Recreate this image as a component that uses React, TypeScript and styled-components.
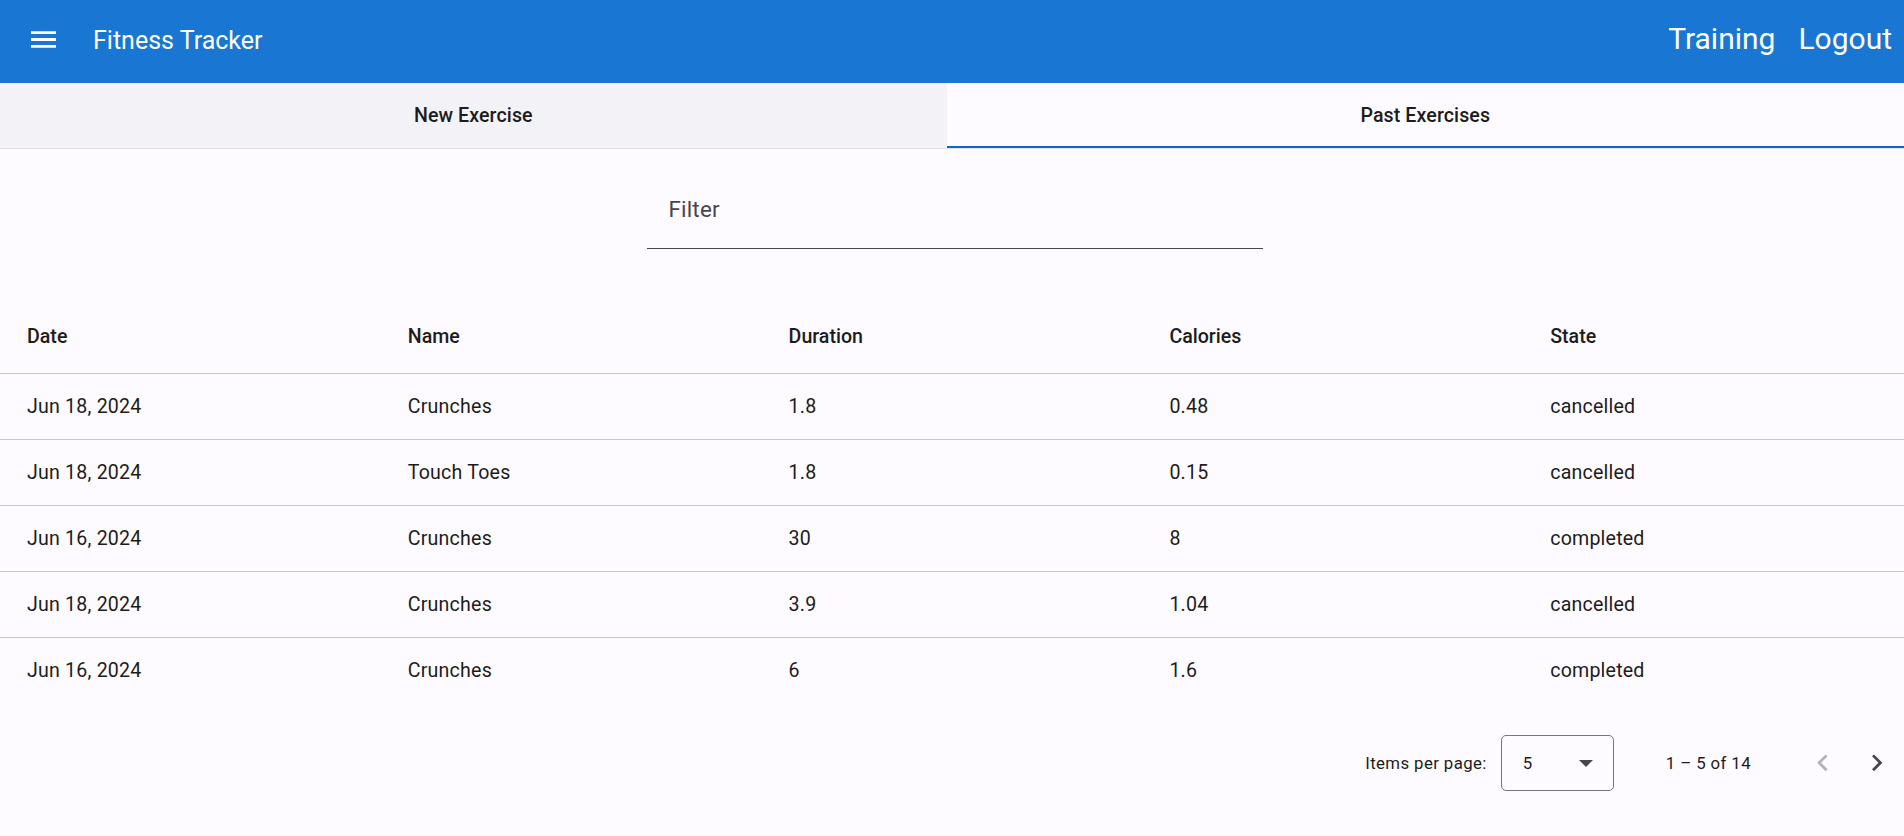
import React from "react";
import styled, { createGlobalStyle } from "styled-components";

const GlobalStyle = createGlobalStyle`
  html, body {
    margin: 0;
    padding: 0;
    background: #fdfbff;
    font-family: Roboto, "Liberation Sans", Arial, sans-serif;
    color: #1d1b20;
  }
  * { box-sizing: border-box; }
`;

const Toolbar = styled.header`
  height: 83px;
  background: #1976d2;
  color: #ffffff;
  display: flex;
  align-items: center;
  padding: 0 12px 0 31px;
`;

const MenuButton = styled.button`
  background: none;
  border: none;
  padding: 0;
  margin: 0 37px 5px 0;
  display: flex;
  align-items: center;
  color: #ffffff;
  cursor: pointer;
`;

const Title = styled.span`
  font-size: 25px;
  font-weight: 400;
  line-height: 1;
  padding-bottom: 3px;
`;

const Spacer = styled.div`
  flex: 1;
`;

const NavList = styled.nav`
  display: flex;
  align-items: center;
  gap: 23px;
`;

const NavLink = styled.a`
  font-size: 30px;
  color: #ffffff;
  text-decoration: none;
  line-height: 1;
  padding-bottom: 6px;
`;

const TabBar = styled.div`
  display: flex;
  border-bottom: 1px solid #e1e0e6;
`;

const Tab = styled.div<{ $active?: boolean }>`
  flex: 1 1 auto;
  height: 65px;
  display: flex;
  align-items: center;
  justify-content: center;
  font-size: 19.6px;
  font-weight: 500;
  letter-spacing: 0.1px;
  color: #1d1b20;
  background: ${(p) => (p.$active ? "#fdfbff" : "#f3f2f6")};
  box-shadow: ${(p) => (p.$active ? "inset 0 -2px 0 #1565c0" : "none")};
  cursor: pointer;
`;

const FilterRow = styled.div`
  display: flex;
  justify-content: center;
  padding: 21px 0 51px 5px;
`;

const FormField = styled.label`
  width: 616px;
  height: 79px;
  display: flex;
  align-items: center;
  padding-left: 22px;
  border-bottom: 1px solid #49454f;
  font-size: 22.4px;
  color: #49454f;
  letter-spacing: 0.2px;
`;

const Table = styled.table`
  width: 100%;
  table-layout: fixed;
  border-collapse: collapse;
`;

const HeadCell = styled.th`
  height: 73px;
  padding: 0 0 0 27px;
  text-align: left;
  font-size: 19.6px;
  font-weight: 500;
  letter-spacing: 0;
  color: #1d1b20;
  border-bottom: 1px solid #cac8cf;
`;

const Row = styled.tr<{ $last?: boolean }>`
  height: 66px;
  border-bottom: ${(p) => (p.$last ? "none" : "1px solid #cac8cf")};
`;

const Cell = styled.td`
  padding: 0 0 0 27px;
  font-size: 19.6px;
  letter-spacing: 0.2px;
  color: #1d1b20;
`;

const Paginator = styled.div`
  display: flex;
  justify-content: flex-end;
  align-items: center;
  height: 78px;
  margin-top: 21px;
  font-size: 16.8px;
  letter-spacing: 0.4px;
  color: #1d1b20;
`;

const PageLabel = styled.span`
  margin-right: 14px;
`;

const SelectBox = styled.div`
  width: 113px;
  height: 56px;
  border: 1px solid #79747e;
  border-radius: 5px;
  display: flex;
  align-items: center;
  justify-content: space-between;
  padding: 0 20px 0 21px;
  font-size: 16.8px;
  color: #1d1b20;
`;

const RangeLabel = styled.span`
  margin: 0 45px 0 52px;
`;

const PageButton = styled.button<{ $disabled?: boolean }>`
  width: 54px;
  height: 56px;
  background: none;
  border: none;
  padding: 0;
  display: flex;
  align-items: center;
  justify-content: center;
  color: ${(p) => (p.$disabled ? "#b3b1b7" : "#49454f")};
  cursor: ${(p) => (p.$disabled ? "default" : "pointer")};
`;

const rows = [
  { date: "Jun 18, 2024", name: "Crunches", duration: "1.8", calories: "0.48", state: "cancelled" },
  { date: "Jun 18, 2024", name: "Touch Toes", duration: "1.8", calories: "0.15", state: "cancelled" },
  { date: "Jun 16, 2024", name: "Crunches", duration: "30", calories: "8", state: "completed" },
  { date: "Jun 18, 2024", name: "Crunches", duration: "3.9", calories: "1.04", state: "cancelled" },
  { date: "Jun 16, 2024", name: "Crunches", duration: "6", calories: "1.6", state: "completed" },
];

export default function App() {
  return (
    <>
      <GlobalStyle />
      <Toolbar>
        <MenuButton aria-label="menu">
          <svg width="25" height="17" viewBox="3 6 18 12" fill="currentColor">
            <path d="M3 18h18v-2H3v2zm0-5h18v-2H3v2zm0-7v2h18V6H3z" />
          </svg>
        </MenuButton>
        <Title>Fitness Tracker</Title>
        <Spacer />
        <NavList>
          <NavLink href="#">Training</NavLink>
          <NavLink href="#">Logout</NavLink>
        </NavList>
      </Toolbar>
      <TabBar>
        <Tab>New Exercise</Tab>
        <Tab $active>Past Exercises</Tab>
      </TabBar>
      <FilterRow>
        <FormField>Filter</FormField>
      </FilterRow>
      <Table>
        <thead>
          <tr>
            <HeadCell>Date</HeadCell>
            <HeadCell>Name</HeadCell>
            <HeadCell>Duration</HeadCell>
            <HeadCell>Calories</HeadCell>
            <HeadCell>State</HeadCell>
          </tr>
        </thead>
        <tbody>
          {rows.map((r, i) => (
            <Row key={i} $last={i === rows.length - 1}>
              <Cell>{r.date}</Cell>
              <Cell>{r.name}</Cell>
              <Cell>{r.duration}</Cell>
              <Cell>{r.calories}</Cell>
              <Cell>{r.state}</Cell>
            </Row>
          ))}
        </tbody>
      </Table>
      <Paginator>
        <PageLabel>Items per page:</PageLabel>
        <SelectBox>
          <span>5</span>
          <svg width="14" height="7" viewBox="7 10 10 5" fill="#49454f">
            <path d="M7 10l5 5 5-5z" />
          </svg>
        </SelectBox>
        <RangeLabel>1 – 5 of 14</RangeLabel>
        <PageButton $disabled aria-label="previous page">
          <svg width="33.6" height="33.6" viewBox="0 0 24 24" fill="currentColor">
            <path d="M15.41 7.41L14 6l-6 6 6 6 1.41-1.41L10.83 12z" />
          </svg>
        </PageButton>
        <PageButton aria-label="next page">
          <svg width="33.6" height="33.6" viewBox="0 0 24 24" fill="currentColor">
            <path d="M10 6L8.59 7.41 13.17 12l-4.58 4.59L10 18l6-6z" />
          </svg>
        </PageButton>
      </Paginator>
    </>
  );
}
